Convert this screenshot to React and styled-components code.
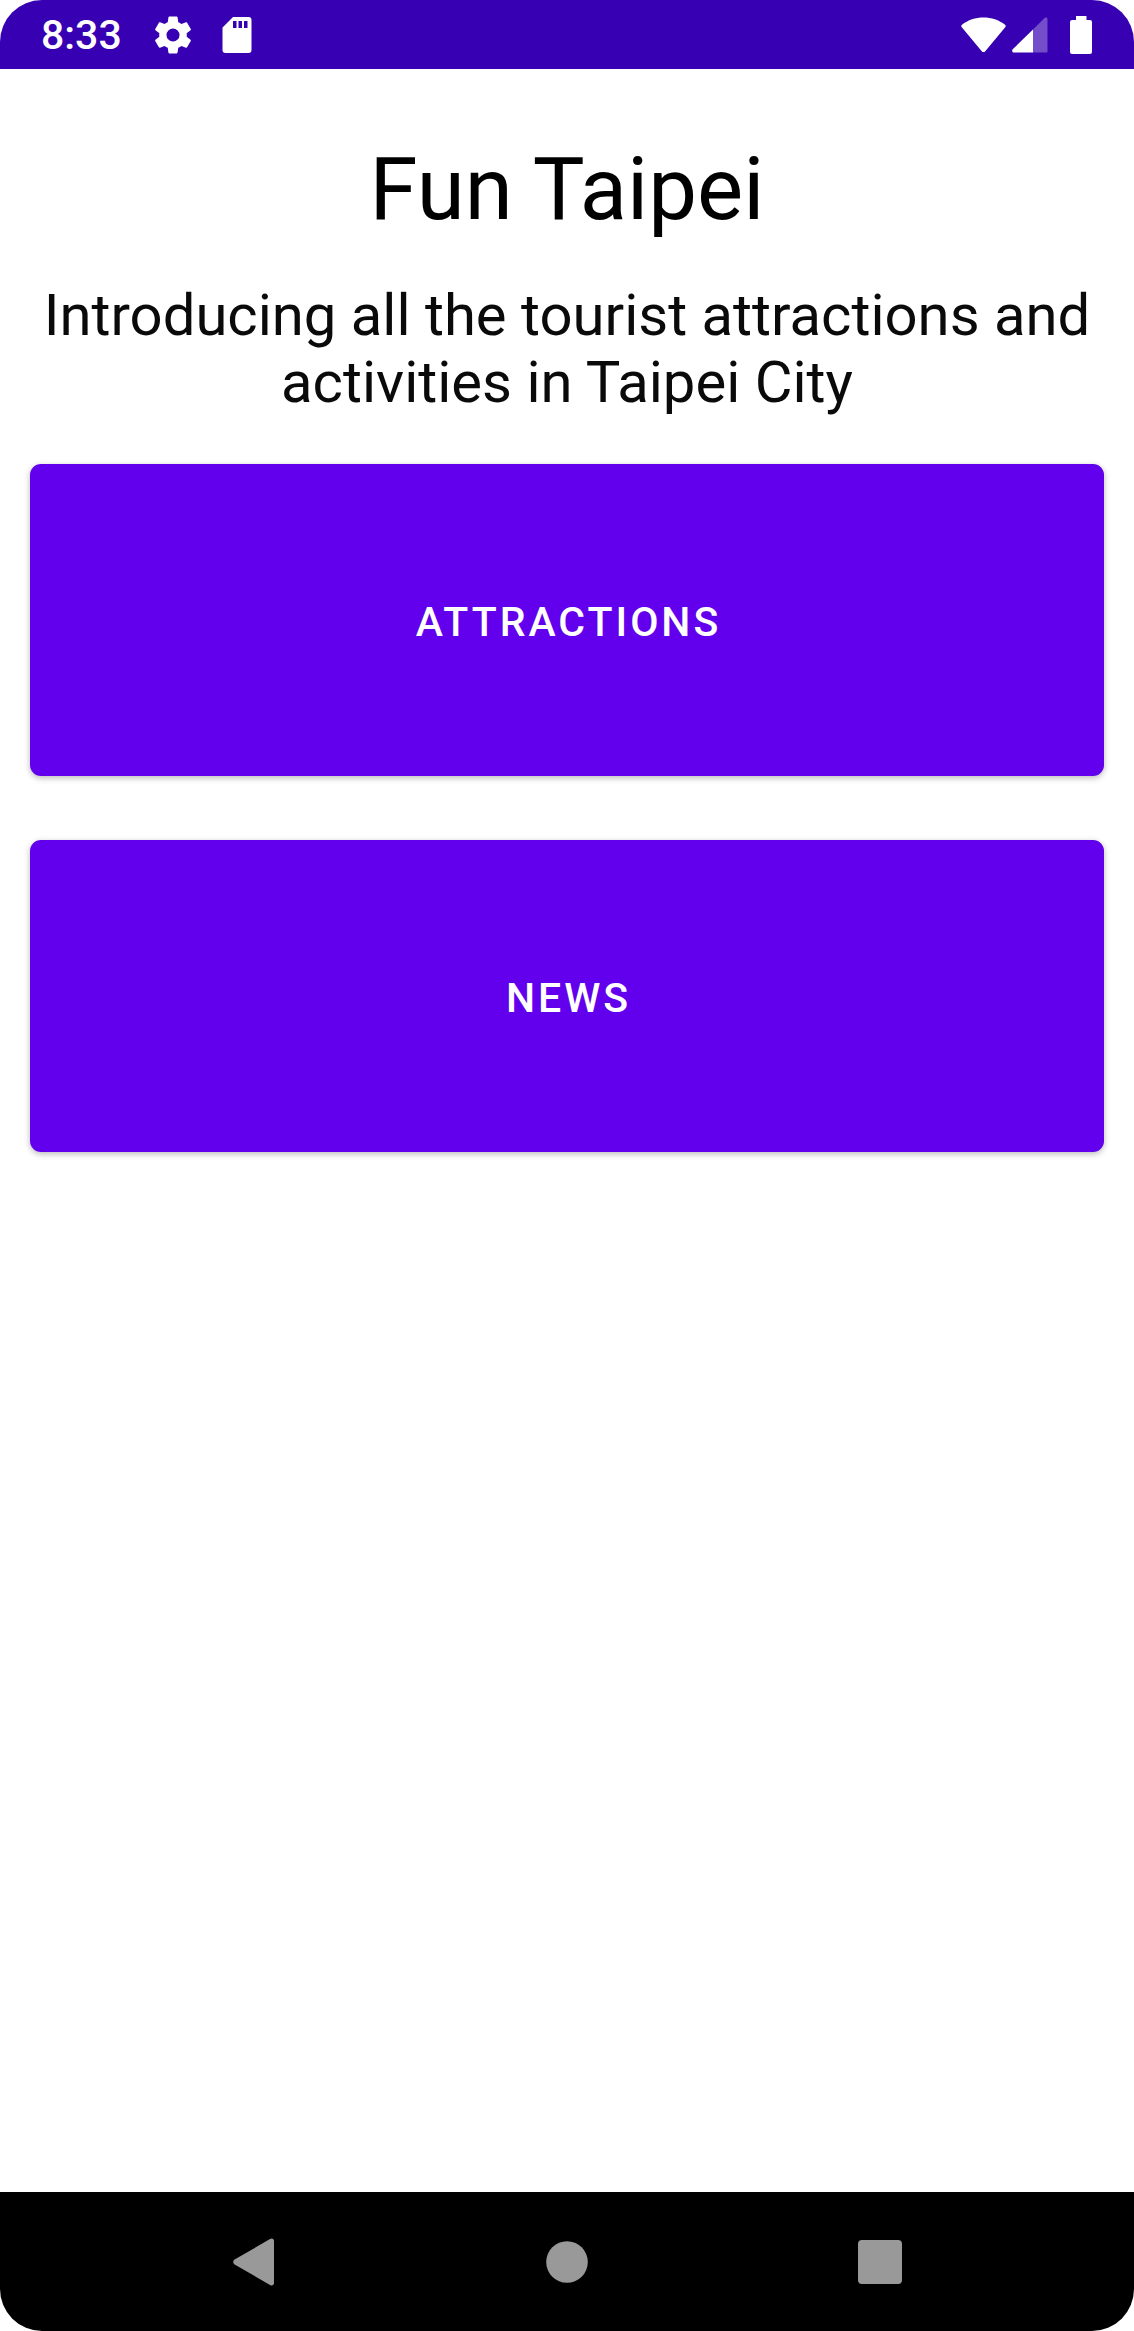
import React from 'react';
import styled, { createGlobalStyle } from 'styled-components';

const GlobalStyle = createGlobalStyle`
  * { box-sizing: border-box; }
  body {
    margin: 0;
    background: #ffffff;
    font-family: Roboto, "Liberation Sans", sans-serif;
  }
`;

const Screen = styled.div`
  display: flex;
  flex-direction: column;
  min-height: 100vh;
  overflow: hidden;
  border-radius: 42px;
  background: #ffffff;
`;

const StatusBar = styled.header`
  display: flex;
  align-items: center;
  justify-content: space-between;
  height: 69px;
  padding: 0 42px 0 41px;
  background: #3700b3;
  color: #ffffff;
`;

const StatusGroup = styled.div`
  display: flex;
  align-items: center;
  gap: ${({ $gap }) => $gap}px;
`;

const Clock = styled.time`
  font-size: 41px;
  font-weight: 500;
  line-height: 48px;
`;

const Glyph = styled.svg`
  display: block;
  flex: none;
  fill: currentColor;
`;

const Content = styled.main`
  display: flex;
  flex: 1;
  flex-direction: column;
  padding: 70px 30px;
`;

const Title = styled.h1`
  margin: 0 0 42px;
  color: #000000;
  font-size: 87px;
  font-weight: 400;
  line-height: 101px;
  text-align: center;
`;

const Intro = styled.p`
  margin: 0 0 48px;
  color: #0a0a0a;
  font-size: 58px;
  font-weight: 400;
  line-height: 67px;
  text-align: center;
`;

const Menu = styled.nav`
  display: flex;
  flex-direction: column;
  gap: 64px;
`;

const MenuButton = styled.button`
  height: 312px;
  padding: 4px 0 0 3px;
  border: 0;
  border-radius: 11px;
  background: #6200ee;
  box-shadow: 0 2px 6px rgba(0, 0, 0, 0.28);
  color: #ffffff;
  font-family: inherit;
  font-size: 41px;
  font-weight: 500;
  letter-spacing: 3px;
  text-transform: uppercase;
  cursor: pointer;
`;

const NavigationBar = styled.footer`
  display: flex;
  align-items: center;
  justify-content: center;
  gap: 249px;
  height: 139px;
  background: #000000;
`;

const NavButton = styled.button`
  display: flex;
  align-items: center;
  justify-content: center;
  width: 64px;
  height: 64px;
  padding: 0;
  border: 0;
  background: transparent;
  color: #999999;
  cursor: pointer;
`;

const menuItems = ['Attractions', 'News'];

function SettingsIcon() {
  return (
    <Glyph width="46" height="46" viewBox="0 0 24 24" aria-hidden="true">
      <path d="M19.14 12.94c.04-.3.06-.61.06-.94 0-.32-.02-.64-.07-.94l2.03-1.58c.18-.14.23-.41.12-.61l-1.92-3.32c-.12-.22-.37-.29-.59-.22l-2.39.96c-.5-.38-1.03-.7-1.62-.94L14.4 2.81c-.04-.24-.24-.41-.48-.41h-3.84c-.24 0-.43.17-.47.41l-.36 2.54c-.59.24-1.13.57-1.62.94l-2.39-.96c-.22-.08-.47 0-.59.22L2.74 8.87c-.12.21-.08.47.12.61l2.03 1.58c-.05.3-.09.63-.09.94s.02.64.07.94l-2.03 1.58c-.18.14-.23.41-.12.61l1.92 3.32c.12.22.37.29.59.22l2.39-.96c.5.38 1.03.7 1.62.94l.36 2.54c.05.24.24.41.48.41h3.84c.24 0 .44-.17.47-.41l.36-2.54c.59-.24 1.13-.56 1.62-.94l2.39.96c.22.08.47 0 .59-.22l1.92-3.32c.12-.22.07-.47-.12-.61l-2.01-1.58zM12 15.4A3.4 3.4 0 1 1 12 8.6a3.4 3.4 0 0 1 0 6.8z" />
    </Glyph>
  );
}

function SdCardIcon() {
  return (
    <Glyph width="30" height="36" viewBox="0 0 30 36" aria-hidden="true">
      <path
        fillRule="evenodd"
        d="M11 0h15.500a3 3 0 0 1 3 3v30a3 3 0 0 1-3 3h-23a3 3 0 0 1-3-3V10.500zM11 4v7h3.500V4zM16.500 4v7H20V4zM22 4v7h3.500V4z"
      />
    </Glyph>
  );
}

function WifiIcon() {
  return (
    <Glyph width="45" height="36" viewBox="0 0 46 36" aria-hidden="true">
      <path d="M1 7.500C7 2.500 15 0 23 0s16 2.500 22 7.500c.9.800.9 1.800.2 2.700L24.800 34.500c-1 1.200-2.600 1.200-3.600 0L.8 10.200C.1 9.300.1 8.300 1 7.500z" />
    </Glyph>
  );
}

function SignalIcon() {
  return (
    <Glyph width="36" height="36" viewBox="0 0 36 36" aria-hidden="true">
      <path d="M21 12.500 32.500 1C34 0 35.500.500 35.500 2v32.500a1 1 0 0 1-1 1H21z" opacity=".3" />
      <path d="M21 12.500v23H2c-1.700 0-2.500-2-1.300-3.200z" />
    </Glyph>
  );
}

function BatteryIcon() {
  return (
    <Glyph width="22" height="38" viewBox="0 0 22 38" aria-hidden="true">
      <path d="M6 0h10.500v4H20a2 2 0 0 1 2 2v30a2 2 0 0 1-2 2H2a2 2 0 0 1-2-2V6a2 2 0 0 1 2-2h4z" />
    </Glyph>
  );
}

function BackIcon() {
  return (
    <Glyph width="42" height="48" viewBox="0 0 42 48" aria-hidden="true">
      <path d="M1.600 21.600 37 1c2.200-1.300 4 0 4 2v42c0 2-1.800 3.300-4 2L1.600 26.400c-1.800-1.200-1.800-3.600 0-4.800z" />
    </Glyph>
  );
}

function HomeIcon() {
  return (
    <Glyph width="42" height="42" viewBox="0 0 42 42" aria-hidden="true">
      <circle cx="21" cy="21" r="20.800" />
    </Glyph>
  );
}

function RecentsIcon() {
  return (
    <Glyph width="44" height="44" viewBox="0 0 44 44" aria-hidden="true">
      <rect width="44" height="44" rx="4" />
    </Glyph>
  );
}

export default function App() {
  return (
    <>
      <GlobalStyle />
      <Screen>
        <StatusBar>
          <StatusGroup $gap={28}>
            <Clock dateTime="08:33">8:33</Clock>
            <StatusGroup $gap={26}>
              <SettingsIcon />
              <SdCardIcon />
            </StatusGroup>
          </StatusGroup>
          <StatusGroup $gap={6}>
            <WifiIcon />
            <StatusGroup $gap={22}>
              <SignalIcon />
              <BatteryIcon />
            </StatusGroup>
          </StatusGroup>
        </StatusBar>
        <Content>
          <Title>Fun Taipei</Title>
          <Intro>Introducing all the tourist attractions and activities in Taipei City</Intro>
          <Menu>
            {menuItems.map((item) => (
              <MenuButton key={item} type="button">{item}</MenuButton>
            ))}
          </Menu>
        </Content>
        <NavigationBar>
          <NavButton type="button" aria-label="Back"><BackIcon /></NavButton>
          <NavButton type="button" aria-label="Home"><HomeIcon /></NavButton>
          <NavButton type="button" aria-label="Recent apps"><RecentsIcon /></NavButton>
        </NavigationBar>
      </Screen>
    </>
  );
}
